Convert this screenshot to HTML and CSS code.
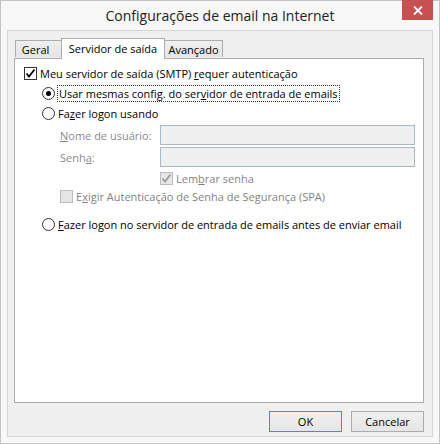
FILE: index.html
```html
<!DOCTYPE html>
<html lang="pt-BR">
<head>
    <meta charset="UTF-8">
    <title>Configurações de email na Internet</title>
    <link rel="stylesheet" href="styles.css">
</head>
<body>
    <div class="janela">
        <div class="titulo">
            <span class="titulo-texto">Configurações de email na Internet</span>
            <div class="fechar">
                <svg width="10" height="9" viewBox="0 0 10 9">
                    <path d="M1 0.5 L9 8.5 M9 0.5 L1 8.5" stroke="#fff" stroke-width="1.8"/>
                </svg>
            </div>
        </div>
        <div class="cliente">
            <div class="abas">
                <div class="aba geral">Geral</div>
                <div class="aba ativa">Servidor de saída</div>
                <div class="aba avancado">Avançado</div>
            </div>
            <div class="painel">
                <div class="linha">
                    <span class="caixa">
                        <svg width="11" height="11" viewBox="0 0 11 11"><path d="M1.5 5.5 L4 8.5 L9.5 1.5" fill="none" stroke="#000" stroke-width="1.8"/></svg>
                    </span>
                    <span>Meu servidor de saída (SMTP) <u>r</u>equer autenticação</span>
                </div>
                <div class="linha recuo">
                    <span class="radio marcado"></span>
                    <span class="foco">Usar mesmas config. do ser<u>v</u>idor de entrada de emails</span>
                </div>
                <div class="linha recuo">
                    <span class="radio"></span>
                    <span>Fa<u>z</u>er logon usando</span>
                </div>
                <div class="campos">
                    <label class="rotulo"><u>N</u>ome de usuário:</label>
                    <div class="entrada"></div>
                    <label class="rotulo">Senh<u>a</u>:</label>
                    <div class="entrada"></div>
                </div>
                <div class="linha lembrar desativado">
                    <span class="caixa inativa">
                        <svg width="11" height="11" viewBox="0 0 11 11"><path d="M1.5 5.5 L4 8.5 L9.5 1.5" fill="none" stroke="#9a9a9a" stroke-width="1.8"/></svg>
                    </span>
                    <span>Lem<u>b</u>rar senha</span>
                </div>
                <div class="linha exigir desativado">
                    <span class="caixa inativa"></span>
                    <span>E<u>x</u>igir Autenticação de Senha de Segurança (SPA)</span>
                </div>
                <div class="linha recuo ultimo">
                    <span class="radio"></span>
                    <span><u>F</u>azer logon no servidor de entrada de emails antes de enviar email</span>
                </div>
            </div>
            <div class="rodape">
                <button class="botao padrao">OK</button>
                <button class="botao">Cancelar</button>
            </div>
        </div>
    </div>
</body>
</html>
```

FILE: styles.css
```css
body {
    margin: 0;
    font-family: "Open Sans", "Noto Sans", sans-serif;
    font-size: 11px;
    color: #000;
    background: #f8f8f8;
}

.janela {
    width: 440px;
    height: 444px;
    box-sizing: border-box;
    border: 1px solid #c4c4c4;
    background: #f8f8f8;
    padding: 0 6px 6px 6px;
    display: flex;
    flex-direction: column;
}

.titulo {
    height: 29px;
    position: relative;
    display: flex;
    justify-content: center;
    align-items: center;
}

.titulo-texto {
    font-size: 14px;
    color: #222;
    margin-top: -1px;
}

.fechar {
    position: absolute;
    right: 0;
    top: -1px;
    width: 31px;
    height: 20px;
    background: #c75050;
    display: flex;
    align-items: center;
    justify-content: center;
}

.cliente {
    flex: 1;
    border: 1px solid #d6d6d6;
    background: #f0f0f0;
    padding: 7px 8px 0 6px;
    display: flex;
    flex-direction: column;
}

.abas {
    display: flex;
    align-items: flex-end;
    height: 20px;
    padding-left: 1px;
    position: relative;
    z-index: 1;
}

.aba {
    box-sizing: border-box;
    height: 17px;
    border: 1px solid #acacac;
    border-bottom: none;
    background: linear-gradient(#f0f0f0, #e5e5e5);
    display: flex;
    align-items: center;
    justify-content: center;
    margin-bottom: 1px;
}

.geral {
    width: 46px;
    padding-right: 6px;
    border-right: none;
}

.aba.ativa {
    width: 104px;
    height: 21px;
    background: #fff;
    margin-bottom: -1px;
    padding-bottom: 1px;
}

.avancado {
    width: 58px;
    border-left: none;
}

.painel {
    height: 339px;
    border: 1px solid #acacac;
    background: #fff;
    padding: 4px 0 0 9px;
}

.linha {
    height: 20px;
    display: flex;
    align-items: center;
}

.recuo {
    padding-left: 18px;
}

.caixa {
    width: 11px;
    height: 11px;
    border: 1px solid #333;
    background: #fff;
    margin-right: 3px;
    display: flex;
    align-items: center;
    justify-content: center;
}

.caixa.inativa {
    border-color: #bcbcbc;
    background: #e6e6e6;
}

.radio {
    width: 11px;
    height: 11px;
    border: 1px solid #333;
    border-radius: 50%;
    background: #fff;
    margin-right: 3px;
    position: relative;
}

.radio.marcado::after {
    content: "";
    position: absolute;
    left: 3px;
    top: 3px;
    width: 5px;
    height: 5px;
    border-radius: 50%;
    background: #000;
}

.foco {
    outline: 1px dotted #333;
    padding: 0 1px;
    line-height: 15px;
}

.campos {
    display: grid;
    grid-template-columns: 100px 255px;
    row-gap: 2px;
    padding-left: 36px;
    margin-top: 2px;
    color: #8a8a8a;
}

.rotulo {
    height: 20px;
    display: flex;
    align-items: center;
}

.entrada {
    height: 18px;
    border: 1px solid #abb7c7;
    background: #f0f0f0;
}

.desativado {
    color: #838383;
}

.lembrar {
    height: 18px;
    margin-top: 2px;
    padding-left: 136px;
}

.exigir {
    height: 18px;
    padding-left: 36px;
}

.ultimo {
    margin-top: 9px;
}

.rodape {
    display: flex;
    justify-content: flex-end;
    gap: 9px;
    margin-top: 8px;
}

.botao {
    width: 73px;
    height: 21px;
    border: 1px solid #acacac;
    background: linear-gradient(#f0f0f0, #e5e5e5);
    font-family: "Open Sans", "Noto Sans", sans-serif;
    font-size: 11px;
    color: #000;
    padding: 0;
}

.botao.padrao {
    border-color: #3c8fe6;
}
```
